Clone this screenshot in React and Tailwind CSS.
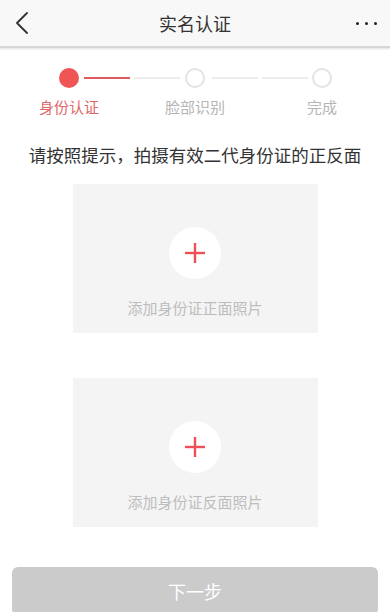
import React from "react";

const steps = [
  { label: "身份认证", active: true },
  { label: "脸部识别", active: false },
  { label: "完成", active: false },
];

function StepDot({ active }) {
  if (active) {
    return <span className="block h-5 w-5 shrink-0 rounded-full bg-[#f05556]" />;
  }
  return <span className="block h-5 w-5 shrink-0 rounded-full border-2 border-[#e3e3e3] bg-white" />;
}

function UploadCard({ label }) {
  return (
    <button
      type="button"
      className="mx-auto flex h-[149px] w-[245px] flex-col items-center bg-[#f4f4f4]"
    >
      <span className="mt-[43px] flex h-[52px] w-[52px] items-center justify-center rounded-full bg-white">
        <svg viewBox="0 0 20 20" className="h-5 w-5" fill="none" stroke="#ef4f55" strokeWidth="2.4" strokeLinecap="butt" aria-hidden="true">
          <path d="M10 0v20" />
          <path d="M0 10h20" />
        </svg>
      </span>
      <span className="mt-[19px] text-[15px] leading-5 text-[#bdbdbd]">{label}</span>
    </button>
  );
}

export default function App() {
  return (
    <div className="flex h-[612px] flex-col overflow-hidden bg-white font-['Noto_Sans_CJK_SC',sans-serif]">
      <header className="relative flex h-[48px] shrink-0 items-center justify-between border-b-[2px] border-[#d6d6d6] bg-[#f8f8f8] pl-[16px] pr-[13px] shadow-[0_1px_2px_rgba(0,0,0,0.12)]">
        <svg viewBox="0 0 12 22" className="h-[22px] w-[12px]" fill="none" stroke="#333" strokeWidth="1.8" strokeLinecap="round" strokeLinejoin="round" aria-hidden="true">
          <path d="M11 1 1 11l10 10" />
        </svg>
        <h1 className="absolute left-1/2 top-[11px] -translate-x-1/2 text-[18px] leading-6 text-[#333]">实名认证</h1>
        <div className="flex items-center gap-[6px]">
          <span className="h-[3px] w-[3px] rounded-full bg-[#222]" />
          <span className="h-[3px] w-[3px] rounded-full bg-[#222]" />
          <span className="h-[3px] w-[3px] rounded-full bg-[#222]" />
        </div>
      </header>

      <section className="pt-[20px]">
        <div className="flex items-center pl-[59px]">
          <StepDot active />
          <span className="ml-[5px] h-[2px] w-[46px] bg-[#e15b5e]" />
          <span className="ml-[4px] h-[2px] w-[46px] bg-[#ececec]" />
          <span className="ml-[5px]" />
          <StepDot />
          <span className="ml-[7px] h-[2px] w-[46px] bg-[#ececec]" />
          <span className="ml-[4px] h-[2px] w-[46px] bg-[#ececec]" />
          <span className="ml-[4px]" />
          <StepDot />
        </div>
        <div className="mt-[9px] grid grid-cols-[138px_114px_140px] text-[15px] leading-5">
          {steps.map((step) => (
            <span
              key={step.label}
              className={"text-center " + (step.active ? "text-[#e06667]" : "text-[#b5b5b5]")}
            >
              {step.label}
            </span>
          ))}
        </div>
      </section>

      <p className="mt-[26px] text-center text-[17.5px] leading-6 text-[#333]">
        请按照提示，拍摄有效二代身份证的正反面
      </p>

      <div className="mt-[17px] flex flex-col gap-[45px]">
        <UploadCard label="添加身份证正面照片" />
        <UploadCard label="添加身份证反面照片" />
      </div>

      <div className="mt-[40px] px-[12px]">
        <button
          type="button"
          disabled
          className="flex h-[48px] w-full items-center justify-center rounded-[6px] bg-[#cbcbcb] text-[18px] text-white"
        >
          下一步
        </button>
      </div>
    </div>
  );
}
